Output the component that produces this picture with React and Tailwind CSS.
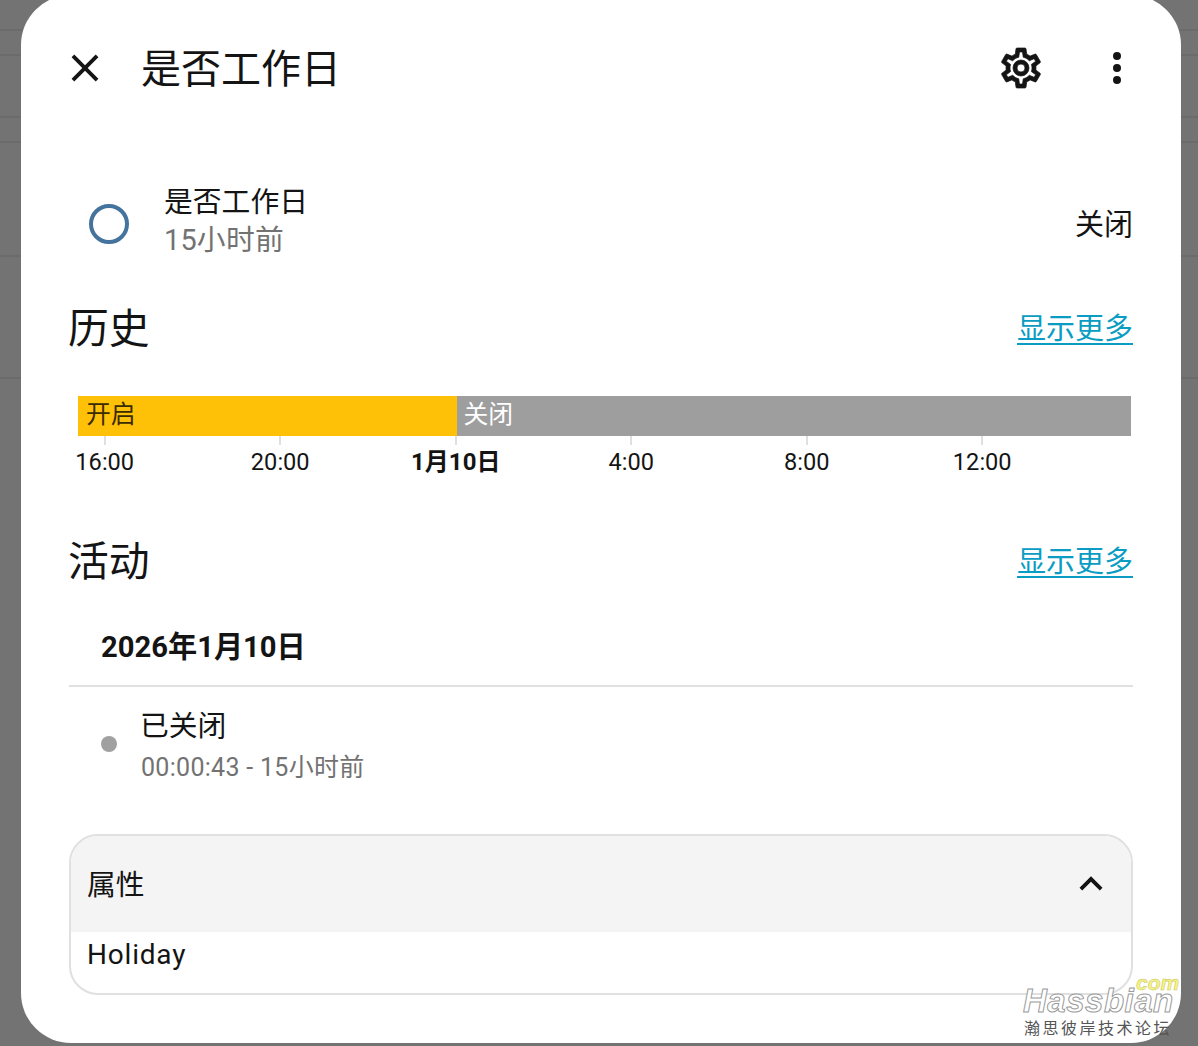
const ticks = ['16:00', '20:00', '1月10日', '4:00', '8:00', '12:00'];
const bgRows = ['h-[31px]', 'h-[25px]', 'h-[62px]', 'h-[25px]', 'h-[114px]', 'h-[122px]'];

function SectionHead({ title }) {
  return (
    <div className="flex items-center justify-between">
      <h2 className="ml-[-1px] text-[40.8px] leading-[48px] text-[#141414]">{title}</h2>
      <a className="text-[29px] leading-[36px] text-[#0a9cc2] underline underline-offset-[4px] decoration-[1.5px]">显示更多</a>
    </div>
  );
}

function Icon({ d, className }) {
  return (
    <svg viewBox="0 0 24 24" className={className} fill="currentColor">
      <path d={d} />
    </svg>
  );
}

const mdiClose = 'M19,6.41L17.59,5L12,10.59L6.41,5L5,6.41L10.59,12L5,17.59L6.41,19L12,13.41L17.59,19L19,17.59L13.41,12L19,6.41Z';
const mdiDots = 'M12,16A2,2 0 0,1 14,18A2,2 0 0,1 12,20A2,2 0 0,1 10,18A2,2 0 0,1 12,16M12,10A2,2 0 0,1 14,12A2,2 0 0,1 12,14A2,2 0 0,1 10,12A2,2 0 0,1 12,10M12,4A2,2 0 0,1 14,6A2,2 0 0,1 12,8A2,2 0 0,1 10,6A2,2 0 0,1 12,4Z';
const mdiChevronUp = 'M7.41,15.41L12,10.83L16.59,15.41L18,14L12,8L6,14L7.41,15.41Z';
const mdiCog = 'M12,8A4,4 0 0,1 16,12A4,4 0 0,1 12,16A4,4 0 0,1 8,12A4,4 0 0,1 12,8M12,10A2,2 0 0,0 10,12A2,2 0 0,0 12,14A2,2 0 0,0 14,12A2,2 0 0,0 12,10M10,22C9.75,22 9.54,21.82 9.5,21.58L9.13,18.93C8.5,18.68 7.96,18.34 7.44,17.94L4.95,18.95C4.73,19.03 4.46,18.95 4.34,18.73L2.34,15.27C2.21,15.05 2.27,14.78 2.46,14.63L4.57,12.97L4.5,12L4.57,11L2.46,9.37C2.27,9.22 2.21,8.95 2.34,8.73L4.34,5.27C4.46,5.05 4.73,4.96 4.95,5.05L7.44,6.05C7.96,5.66 8.5,5.32 9.13,5.07L9.5,2.42C9.54,2.18 9.75,2 10,2H14C14.25,2 14.46,2.18 14.5,2.42L14.87,5.07C15.5,5.32 16.04,5.66 16.56,6.05L19.05,5.05C19.27,4.96 19.54,5.05 19.66,5.27L21.66,8.73C21.79,8.95 21.73,9.22 21.54,9.37L19.43,11L19.5,12L19.43,13L21.54,14.63C21.73,14.78 21.79,15.05 21.66,15.27L19.66,18.73C19.54,18.95 19.27,19.04 19.05,18.95L16.56,17.95C16.04,18.34 15.5,18.68 14.87,18.93L14.5,21.58C14.46,21.82 14.25,22 14,22H10M11.25,4L10.88,6.61C9.68,6.86 8.62,7.5 7.85,8.39L5.44,7.35L4.69,8.65L6.8,10.2C6.4,11.37 6.4,12.64 6.8,13.8L4.68,15.36L5.43,16.66L7.86,15.62C8.63,16.5 9.68,17.14 10.87,17.38L11.24,20H12.76L13.13,17.39C14.32,17.14 15.37,16.5 16.14,15.62L18.57,16.66L19.32,15.36L17.2,13.81C17.6,12.64 17.6,11.37 17.2,10.2L19.31,8.65L18.56,7.35L16.15,8.39C15.38,7.5 14.32,6.86 13.12,6.62L12.75,4H11.25Z';

export default function App() {
  return (
    <div className="relative h-[1046px] w-[1198px] overflow-hidden bg-[#737373] font-['Roboto','Noto_Sans_CJK_SC',sans-serif]">
      {/* page behind the dialog */}
      <div>
        {bgRows.map((h, i) => (
          <div key={i} className={`${h} border-b-2 border-[#6b6b6b]`} />
        ))}
      </div>

      {/* dialog */}
      <div className="absolute left-[21px] top-[-5px] h-[1048px] w-[1160px] rounded-[50px] bg-white px-[48px]">
        <header className="flex h-[146px] items-center">
          <Icon d={mdiClose} className="ml-[-7px] h-[46px] w-[46px] text-[#141414]" />
          <h1 className="ml-[33px] mt-[4px] flex-1 text-[40px] leading-[48px] text-[#141414]">是否工作日</h1>
          <Icon d={mdiCog} className="h-[48px] w-[48px] stroke-current stroke-[0.35] text-[#141414]" />
          <Icon d={mdiDots} className="ml-[48px] mr-[-8px] h-[48px] w-[48px] text-[#141414]" />
        </header>

        <section className="mt-[46px] flex h-[76px] items-center">
          <div className="mt-[-2px] ml-[20px] h-[40px] w-[40px] rounded-full border-[4px] border-[#44739e]" />
          <div className="ml-[35px] mb-[8px] flex-1">
            <div className="text-[28.8px] leading-[38px] text-[#141414]">是否工作日</div>
            <div className="text-[28.8px] leading-[38px] tracking-[0.25px] text-[#727272]">15小时前</div>
          </div>
          <div className="text-[29px] leading-[38px] text-[#141414]">关闭</div>
        </section>

        <section className="mt-[42px]">
          <SectionHead title="历史" />
          <div className="mt-[43px] ml-[9px] mr-[2px] flex h-[40px] text-[24.8px] leading-[37px]">
            <div className="w-[378.5px] bg-[#ffc107] pl-[8px] text-[#3a2c00]">开启</div>
            <div className="flex-1 bg-[#9e9e9e] pl-[7px] text-white">关闭</div>
          </div>
          <div className="ml-[-52px] flex">
            {ticks.map((t, i) => (
              <div key={t} className="flex w-[175.5px] flex-col items-center">
                <div className="h-[9px] w-[2px] bg-[#e0e0e0]" />
                <div className={`mt-[2px] leading-[30px] text-[#141414] ${i === 2 ? 'text-[24px] font-bold' : 'text-[23.6px]'}`}>{t}</div>
              </div>
            ))}
          </div>
        </section>

        <section className="mt-[61px]">
          <SectionHead title="活动" />
          <div className="mt-[41px] pl-[32px] text-[29.2px] leading-[40px] font-bold text-[#141414]">2026年1月10日</div>
          <div className="mt-[18px] h-[2px] bg-[#e0e0e0]" />
          <div className="mt-[20px] flex items-center">
            <div className="ml-[32px] mb-[6px] h-[16px] w-[16px] rounded-full bg-[#a0a0a0]" />
            <div className="ml-[24px]">
              <div className="ml-[-1px] text-[28.8px] leading-[38px] text-[#141414]">已关闭</div>
              <div className="mt-[5px] text-[25px] leading-[36px] tracking-[0.3px] text-[#727272]">00:00:43 - 15小时前</div>
            </div>
          </div>
        </section>

        <section className="mt-[48px] h-[161px] overflow-hidden rounded-[29px] border-2 border-[#e0e0e0]">
          <div className="flex h-[96px] items-center justify-between bg-[#f4f4f4] pl-[16px] pr-[17px]">
            <span className="pt-[4px] text-[28.8px] text-[#141414]">属性</span>
            <Icon d={mdiChevronUp} className="h-[46px] w-[46px] text-[#141414]" />
          </div>
          <div className="pl-[16px] text-[28px] leading-[46px] tracking-[0.8px] text-[#141414]">Holiday</div>
        </section>
      </div>

      {/* forum watermark */}
      <div className="absolute left-[1023px] top-[975px] w-[160px]">
        <div className="ml-[113px] font-['Liberation_Sans'] text-[21px] leading-[16px] font-bold italic text-[#f5f28a] [-webkit-text-stroke:0.5px_#c9c65a]">com</div>
        <div className="mt-[-6px] font-['Liberation_Sans'] text-[33px] leading-[32px] font-bold italic tracking-[0.5px] text-white [-webkit-text-stroke:1px_#9a9a9a]">Hassbian</div>
        <div className="ml-[1px] text-[16px] leading-[24px] tracking-[2.5px] whitespace-nowrap text-[#555555]">瀚思彼岸技术论坛</div>
      </div>
    </div>
  );
}
